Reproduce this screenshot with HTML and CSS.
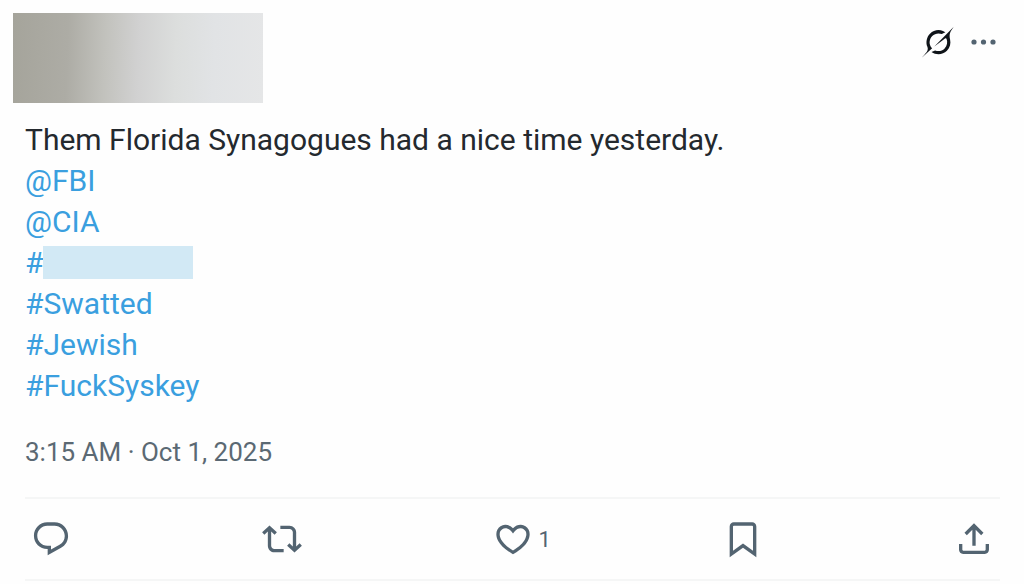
FILE: index.html
```html
<!DOCTYPE html>
<html lang="en">
<head>
<meta charset="utf-8">
<meta name="viewport" content="width=device-width, initial-scale=1">
<title>Post</title>
<link rel="stylesheet" href="styles.css">
</head>
<body>
<article class="post">
  <header class="post-header">
    <div class="author-redacted"></div>
    <div class="header-tools">
      <button class="icon-button grok" type="button" aria-label="Explain this post">
        <svg class="grok-icon" viewBox="0 0 33 32"><path d="M12.745 20.54l10.97-8.19c.539-.4 1.307-.244 1.564.38 1.349 3.288.746 7.241-1.938 9.955-2.683 2.714-6.417 3.31-9.83 1.954l-3.728 1.745c5.347 3.697 11.84 2.782 15.898-1.324 3.219-3.255 4.216-7.692 3.284-11.693l.008.009c-1.351-5.878.332-8.227 3.782-13.031L33 0l-4.54 4.59v-.014L12.743 20.544m-2.263 1.987c-3.837-3.707-3.175-9.446.1-12.755 2.42-2.449 6.388-3.448 9.852-1.979l3.72-1.737c-.67-.49-1.53-1.017-2.515-1.387-4.455-1.854-9.789-.931-13.41 2.728-3.483 3.523-4.579 8.94-2.697 13.561 1.405 3.454-.899 5.898-3.22 8.364C1.49 30.2.666 31.074 0 32l10.478-9.466"/></svg>
      </button>
      <button class="icon-button" type="button" aria-label="More">
        <svg class="more-icon" viewBox="0 0 26 32"><circle cx="4" cy="16" r="2.6"/><circle cx="13.5" cy="16" r="2.6"/><circle cx="23" cy="16" r="2.6"/></svg>
      </button>
    </div>
  </header>

  <div class="post-text">
    <p>Them Florida Synagogues had a nice time yesterday.</p>
    <p><a href="#fbi">@FBI</a></p>
    <p><a href="#cia">@CIA</a></p>
    <p class="redacted-line"><a href="#tag">#</a><span class="tag-redacted"></span></p>
    <p><a href="#swatted">#Swatted</a></p>
    <p><a href="#jewish">#Jewish</a></p>
    <p><a href="#fucksyskey">#FuckSyskey</a></p>
  </div>

  <time class="post-time" datetime="2025-10-01T03:15">3:15 AM · Oct 1, 2025</time>

  <div class="actions">
    <button class="icon-button action" type="button" aria-label="Reply">
      <svg class="action-icon" viewBox="0 0 24 24"><path d="M1.751 10c0-4.42 3.584-8 8.005-8h4.366c4.49 0 8.129 3.64 8.129 8.13 0 2.96-1.607 5.68-4.196 7.11l-8.054 4.46v-3.69h-.067c-4.49.1-8.183-3.51-8.183-8.01zm8.005-6c-3.317 0-6.005 2.69-6.005 6 0 3.37 2.77 6.08 6.138 6.01l.351-.01h1.761v2.3l5.087-2.81c1.951-1.08 3.163-3.13 3.163-5.36 0-3.39-2.744-6.13-6.129-6.13H9.756z"/></svg>
    </button>
    <button class="icon-button action" type="button" aria-label="Repost">
      <svg class="action-icon" viewBox="0 0 24 24"><path d="M4.5 3.88l4.432 4.14-1.364 1.46L5.5 7.55V16c0 1.1.896 2 2 2H13v2H7.5c-2.209 0-4-1.79-4-4V7.55L1.432 9.48.068 8.02 4.5 3.88zM16.5 6H11V4h5.5c2.209 0 4 1.79 4 4v8.45l2.068-1.93 1.364 1.46-4.432 4.14-4.432-4.14 1.364-1.46 2.068 1.93V8c0-1.1-.896-2-2-2z"/></svg>
    </button>
    <button class="icon-button action" type="button" aria-label="1 like">
      <svg class="action-icon" viewBox="0 0 24 24"><path d="M16.697 5.5c-1.222-.06-2.679.51-3.89 2.16l-.805 1.09-.806-1.09C9.984 6.01 8.526 5.44 7.304 5.5c-1.243.07-2.349.78-2.91 1.91-.552 1.12-.633 2.78.479 4.82 1.074 1.97 3.257 4.27 7.129 6.61 3.87-2.34 6.052-4.64 7.126-6.61 1.111-2.04 1.03-3.7.477-4.82-.561-1.13-1.666-1.84-2.908-1.91zm4.187 7.69c-1.351 2.48-4.001 5.12-8.379 7.67l-.503.3-.504-.3c-4.379-2.55-7.029-5.19-8.382-7.67-1.36-2.5-1.41-4.86-.514-6.67.887-1.79 2.647-2.91 4.601-3.01 1.651-.09 3.368.56 4.798 2.01 1.429-1.45 3.146-2.1 4.796-2.01 1.954.1 3.714 1.22 4.601 3.01.896 1.81.846 4.17-.514 6.67z"/></svg>
      <span class="count">1</span>
    </button>
    <button class="icon-button action" type="button" aria-label="Bookmark">
      <svg class="action-icon" viewBox="0 0 24 24"><path d="M4 4.5C4 3.12 5.119 2 6.5 2h11C18.881 2 20 3.12 20 4.5v18.44l-8-5.71-8 5.71V4.5zM6.5 4c-.276 0-.5.22-.5.5v14.56l6-4.29 6 4.29V4.5c0-.28-.224-.5-.5-.5h-11z"/></svg>
    </button>
    <button class="icon-button action" type="button" aria-label="Share">
      <svg class="action-icon" viewBox="0 0 24 24"><path d="M12 2.59l5.7 5.7-1.41 1.42L13 6.41V16h-2V6.41l-3.3 3.3-1.41-1.42L12 2.59zM21 15l-.02 3.51c0 1.38-1.12 2.49-2.5 2.49H5.5C4.11 21 3 19.88 3 18.5V15h2v3.5c0 .28.22.5.5.5h12.98c.28 0 .5-.22.5-.5L19 15h2z"/></svg>
    </button>
  </div>
</article>
</body>
</html>
```

FILE: styles.css
```css
* {
  box-sizing: border-box;
}

body {
  margin: 0;
  background: #fefefe;
  color: #24292e;
  font-family: Roboto, "Liberation Sans", sans-serif;
}

.post {
  padding: 13px 24px 0 25px;
}

.post-header {
  display: flex;
  justify-content: space-between;
  align-items: flex-start;
  margin-left: -12px;
}

.author-redacted {
  width: 250px;
  height: 90px;
  background: linear-gradient(92deg, #a5a49b 0%, #adaca5 22%, #c2c2bd 37%, #d1d1d1 50%, #dcdedd 65%, #e1e3e5 80%, #e5e6e7 100%);
}

.header-tools {
  display: flex;
  gap: 16px;
  padding: 13px 4px 0 0;
}

.icon-button {
  display: flex;
  align-items: center;
  padding: 0;
  border: 0;
  background: none;
  color: #536471;
  font: inherit;
  cursor: pointer;
}

.icon-button svg {
  flex: none;
  fill: currentColor;
}

.grok {
  color: #0f1419;
}

.grok-icon {
  width: 32px;
  height: 32px;
}

.more-icon {
  width: 26px;
  height: 32px;
}

.post-text {
  margin-top: 16px;
  font-size: 30px;
  line-height: 41px;
}

.post-text p {
  margin: 0;
}

.post-text a {
  color: #3a9fdf;
  text-decoration: none;
}

.redacted-line {
  display: flex;
  align-items: center;
}

.tag-redacted {
  width: 150px;
  height: 33px;
  background: #d2e9f5;
}

.post-time {
  display: block;
  margin-top: 28px;
  color: #5b6973;
  font-size: 26px;
  line-height: 36px;
}

.actions {
  display: flex;
  justify-content: space-between;
  margin-top: 27px;
  padding: 20px 6px;
  border-top: 2px solid #f5f6f6;
  border-bottom: 2px solid #f5f6f6;
}

.action {
  width: 40px;
  gap: 6px;
}

.action-icon {
  width: 40px;
  height: 40px;
}

.count {
  font-size: 22px;
}
```
